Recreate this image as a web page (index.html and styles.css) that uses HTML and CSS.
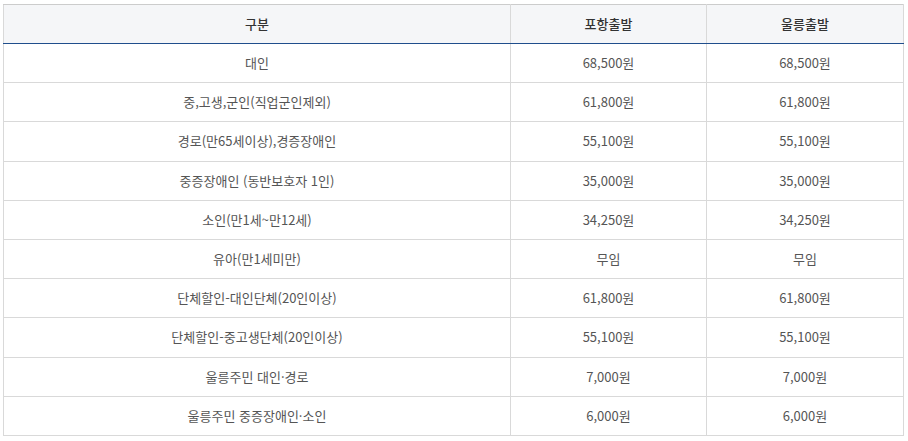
FILE: index.html
```html
<!DOCTYPE html>
<html lang="ko">
<head>
<meta charset="utf-8">
<link rel="stylesheet" href="styles.css">
</head>
<body>
<div class="wrap">
<table class="fare">
  <colgroup>
    <col class="c1"><col class="c2"><col class="c3">
  </colgroup>
  <thead>
    <tr><th>구분</th><th>포항출발</th><th>울릉출발</th></tr>
  </thead>
  <tbody>
    <tr><td>대인</td><td>68,500원</td><td>68,500원</td></tr>
    <tr><td>중,고생,군인(직업군인제외)</td><td>61,800원</td><td>61,800원</td></tr>
    <tr><td>경로(만65세이상),경증장애인</td><td>55,100원</td><td>55,100원</td></tr>
    <tr><td>중증장애인 (동반보호자 1인)</td><td>35,000원</td><td>35,000원</td></tr>
    <tr><td>소인(만1세~만12세)</td><td>34,250원</td><td>34,250원</td></tr>
    <tr><td>유아(만1세미만)</td><td>무임</td><td>무임</td></tr>
    <tr><td>단체할인-대인단체(20인이상)</td><td>61,800원</td><td>61,800원</td></tr>
    <tr><td>단체할인-중고생단체(20인이상)</td><td>55,100원</td><td>55,100원</td></tr>
    <tr><td>울릉주민 대인·경로</td><td>7,000원</td><td>7,000원</td></tr>
    <tr><td>울릉주민 중증장애인·소인</td><td>6,000원</td><td>6,000원</td></tr>
  </tbody>
</table>
</div>
</body>
</html>
```

FILE: styles.css
```css
html, body {
  margin: 0;
  padding: 0;
  background: #ffffff;
}
.wrap {
  padding: 4px 5px 0 3px;
}
.fare {
  width: 900px;
  border-collapse: collapse;
  table-layout: fixed;
  font-family: "Noto Sans CJK KR", "Noto Sans", sans-serif;
  font-size: 13px;
  color: #555555;
}
.c1 { width: 507px; }
.c2 { width: 196px; }
.c3 { width: 197px; }
.fare th,
.fare td {
  text-align: center;
  padding: 0;
  border: 1px solid #d9d9d9;
  line-height: 18px;
}
.fare thead th {
  height: 38px;
  background: #f5f6f8;
  color: #333333;
  font-weight: 500;
  border-top: 1px solid #cccccc;
  border-bottom: 1px solid #1f4e8c;
}
.fare tbody td {
  height: 38.2px;
}
```
